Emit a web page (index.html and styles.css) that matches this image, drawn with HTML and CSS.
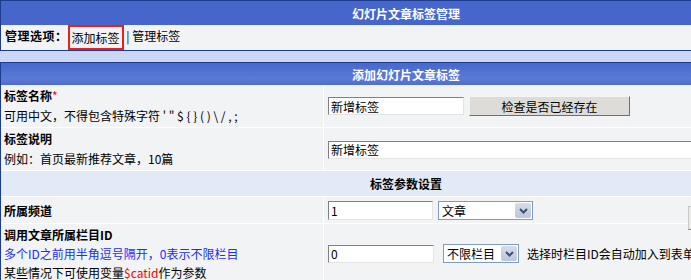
FILE: index.html
```html
<!DOCTYPE html>
<html lang="zh-CN">
<head>
  <meta charset="UTF-8">
  <title>幻灯片文章标签管理</title>
  <link rel="stylesheet" href="styles.css">
</head>
<body>

  <table class="panel">
    <tr><th class="panel-title">幻灯片文章标签管理</th></tr>
    <tr>
      <td class="menu"><b>管理选项：</b><a class="menu-on" href="#">添加标签</a> | <a href="#">管理标签</a></td>
    </tr>
  </table>

  <form>
    <table class="panel form-table">
      <tr><th colspan="2" class="form-title">添加幻灯片文章标签</th></tr>
      <tr>
        <td class="label row-2">
          <b>标签名称</b><span class="req">*</span><br>
          可用中文，不得包含特殊字符 ' " $ { } ( ) \ / , ;
        </td>
        <td class="field"><input type="text" class="txt txt-name" value="新增标签"><input type="button" class="btn btn-check" value="检查是否已经存在"></td>
      </tr>
      <tr>
        <td class="label row-2">
          <b>标签说明</b><br>
          例如：首页最新推荐文章，10篇
        </td>
        <td class="field"><input type="text" class="txt txt-desc" value="新增标签"></td>
      </tr>
      <tr><td colspan="2" class="section">标签参数设置</td></tr>
      <tr>
        <td class="label row-1"><b>所属频道</b></td>
        <td class="field"><input type="text" class="txt txt-channel" value="1"><span class="select select-module">
            <select><option>文章</option></select>
            <span class="select-arrow"><svg width="9" height="6" viewBox="0 0 9 6"><path d="M1 1 L4.5 4.5 L8 1" fill="none" stroke="#3b4f7a" stroke-width="2"/></svg></span>
          </span><span class="edge-btn"></span></td>
      </tr>
      <tr>
        <td class="label row-3">
          <b>调用文章所属栏目ID</b><br>
          <span class="blue">多个ID之前用半角逗号隔开，0表示不限栏目</span><br>
          某些情况下可使用变量<span class="red">$catid</span>作为参数
        </td>
        <td class="field"><input type="text" class="txt txt-catid" value="0"><span class="select select-cat">
            <select><option>不限栏目</option></select>
            <span class="select-arrow"><svg width="9" height="6" viewBox="0 0 9 6"><path d="M1 1 L4.5 4.5 L8 1" fill="none" stroke="#3b4f7a" stroke-width="2"/></svg></span>
          </span><span class="hint">选择时栏目ID会自动加入到表单中</span></td>
      </tr>
    </table>
  </form>

</body>
</html>
```

FILE: styles.css
```css
html {
  overflow: hidden;
}

body {
  margin: 0;
  background-color: #cbd7f3;
  font: 12px "Noto Sans CJK SC", sans-serif;
  color: #000;
}

a {
  color: #000;
  text-decoration: none;
}

b {
  font-weight: bold;
}

.panel {
  width: 812px;
  border: 1px solid #1f3b8d;
  border-collapse: separate;
  border-spacing: 0;
}

.panel th,
.panel td {
  padding: 0;
}

.panel-title {
  height: 24px;
  background-color: #4666cc;
  color: #fff;
  font-weight: bold;
}

.menu {
  height: 25px;
  padding: 0 4px !important;
  background-color: #f1f3f5;
  white-space: nowrap;
}

.menu b {
  letter-spacing: 0.5px;
}

.menu-on {
  display: inline-block;
  height: 21px;
  line-height: 21px;
  padding: 0 2px;
  border: 2px solid #e8211d;
  vertical-align: middle;
}

.form-table {
  margin-top: 11px;
}

.form-title {
  height: 22px;
  background: linear-gradient(to bottom, #4767cc, #5b7ad6 70%, #4e6dcf);
  color: #fff;
  font-weight: bold;
}

.label {
  width: 316px;
  padding: 0 3px !important;
  background-color: #f1f3f5;
  border-right: 1px solid #fff;
  border-bottom: 1px solid #fff;
  white-space: nowrap;
}

.row-1 {
  height: 26px;
}

.row-2 {
  height: 40px;
  line-height: 20px;
  padding-top: 1px !important;
  padding-bottom: 1px !important;
}

.row-3 {
  line-height: 19px;
  padding-top: 1px !important;
}

.req,
.red {
  color: #f00;
}

.blue {
  color: #1c2ef0;
}

.field {
  padding: 0 4px !important;
  background-color: #f1f3f5;
  border-bottom: 1px solid #fff;
  white-space: nowrap;
}

.section {
  height: 25px;
  background-color: #e2eaf7;
  border-bottom: 1px solid #fff;
  text-align: center;
  font-weight: bold;
}

.txt {
  box-sizing: border-box;
  height: 18px;
  padding: 0 2px;
  border: 1px solid;
  border-color: #808080 #e4e4e4 #e4e4e4 #808080;
  background-color: #fff;
  font: 12px "Noto Sans CJK SC", sans-serif;
  vertical-align: middle;
}

.txt-name {
  width: 136px;
}

.txt-desc {
  width: 450px;
}

.txt-channel {
  width: 105px;
  height: 19px;
}

.txt-catid {
  width: 106px;
}

.btn {
  box-sizing: border-box;
  height: 20px;
  margin-left: 5px;
  padding: 0;
  border: 1px solid;
  border-color: #f4f4f4 #6f6f6f #6f6f6f #f4f4f4;
  background-color: #dedcd8;
  font: 12px "Noto Sans CJK SC", sans-serif;
  color: #000;
  vertical-align: middle;
}

.btn-check {
  width: 161px;
}

.select {
  display: inline-flex;
  box-sizing: border-box;
  height: 19px;
  border: 1px solid #7f9db9;
  background-color: #fff;
  vertical-align: middle;
}

.select select {
  flex: 1;
  min-width: 0;
  appearance: none;
  -webkit-appearance: none;
  border: none;
  outline: none;
  background: transparent;
  padding: 0 3px;
  font: 12px "Noto Sans CJK SC", sans-serif;
  color: #000;
}

.select-arrow {
  display: flex;
  align-items: center;
  justify-content: center;
  width: 16px;
  margin: 1px;
  border-radius: 2px;
  background: linear-gradient(to bottom, #d6dcea, #bcc6dc);
}

.select-module {
  width: 95px;
  margin-left: 5px;
}

.select-cat {
  width: 76px;
  margin-left: 9px;
}

.hint {
  margin-left: 8px;
  vertical-align: middle;
}

.edge-btn {
  display: inline-block;
  width: 20px;
  height: 22px;
  margin-left: 155px;
  margin-bottom: -14px;
  border: 1px solid;
  border-color: #c8c8c8 #808080 #808080 #c8c8c8;
  background-color: #ecebe8;
  vertical-align: middle;
}
```
